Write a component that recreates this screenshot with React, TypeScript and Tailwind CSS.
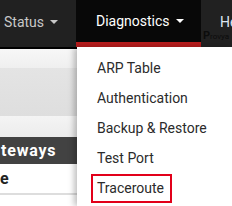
import React from "react";

const menuItems = ["ARP Table", "Authentication", "Backup & Restore", "Test Port"];

const Caret: React.FC<{ color: string }> = ({ color }) => (
  <span
    className={`ml-[6px] inline-block h-0 w-0 border-x-[4px] border-t-[4px] border-x-transparent ${color}`}
  />
);

const App: React.FC = () => {
  return (
    <div className="relative h-[206px] w-[232px] overflow-hidden bg-white font-['Roboto',sans-serif]">
      {/* top navbar */}
      <nav className="flex h-[49px] border-b-2 border-black bg-[#212121] text-[14px]">
        <div className="flex h-[47px] w-[76px] shrink-0 items-center pb-[3px] pl-[4px] text-[#c8c8c8]">
          <span>Status</span>
          <Caret color="border-t-[#c8c8c8]" />
        </div>
        <div className="flex h-[47px] w-[125px] shrink-0 items-center border-b-[5px] border-[#b71c1c] bg-[#080808] pl-[20px] text-white">
          <span>Diagnostics</span>
          <Caret color="border-t-white" />
        </div>
        <div className="relative flex h-[47px] shrink-0 items-center pb-[3px] pl-[19px] text-[#dde6f0]">
          <span>Help</span>
          <span className="absolute left-[2px] top-[30px] text-[8px] leading-none text-[#0c0c0c]">
            <span className="text-[11px] font-bold">P</span>rovya
          </span>
        </div>
      </nav>

      {/* page content behind the menu */}
      <div className="flex flex-col">
        <div className="h-[19px] bg-gradient-to-b from-[#f7f7f7] to-[#efefef]" />
        <div className="h-[48px] bg-gradient-to-b from-[#e4e4e4] to-[#dedede]" />
        <div className="h-[21px] bg-gradient-to-b from-[#f4f4f4] to-[#ececec]" />
        <div className="flex h-[27px] items-center bg-[#424242] pl-[1px] text-[16px] font-bold tracking-[0.8px] text-white">
          teways
        </div>
        <div className="flex h-[31px] items-center border-b-2 border-[#dddddd] text-[16px] font-bold text-[#222]">
          e
        </div>
      </div>

      {/* dropdown menu */}
      <ul className="absolute bottom-0 left-[77px] right-0 top-[47px] bg-white pt-[6px] text-[14px] text-[#2b2b2b] shadow-[-3px_0_6px_rgba(0,0,0,0.25)]">
        {menuItems.map((item) => (
          <li key={item} className="flex h-[30px] items-center whitespace-nowrap pl-[20px]">
            {item}
          </li>
        ))}
        <li className="flex h-[30px] items-center pl-[14px]">
          <span className="flex h-[29px] w-[81px] items-center border-2 border-[#e2001a] pl-[4px]">
            Traceroute
          </span>
        </li>
      </ul>
    </div>
  );
};

export default App;
